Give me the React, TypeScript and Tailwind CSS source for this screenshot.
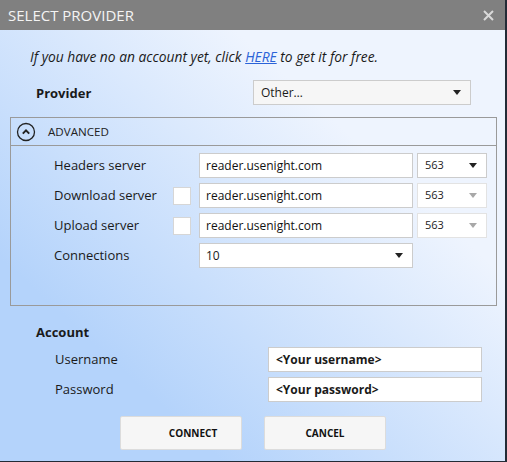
import React from "react";

const font = { fontFamily: '"Open Sans", "Noto Sans", sans-serif' };

function Arrow({ disabled = false }: { disabled?: boolean }) {
  return (
    <svg width="8" height="5" viewBox="0 0 8 5" className="shrink-0">
      <path d="M0 0 L8 0 L4 5 Z" fill={disabled ? "#a8a8a8" : "#222"} />
    </svg>
  );
}

function Port({ disabled = false }: { disabled?: boolean }) {
  return (
    <div
      className={`ml-[4px] flex h-[25px] w-[70px] items-center justify-between border bg-white pl-[7px] pr-[9px] text-[11px] text-[#222] ${
        disabled ? "border-[#e3e3e3]" : "border-[#cccccc]"
      }`}
    >
      <span>563</span>
      <Arrow disabled={disabled} />
    </div>
  );
}

function Field({ text }: { text: string }) {
  return (
    <div className="flex h-[25px] w-[214px] items-center border border-[#cccccc] bg-white pl-[6px] text-[12px] text-[#111]">
      {text}
    </div>
  );
}

function Check() {
  return <div className="mr-[8px] h-[18px] w-[18px] border border-[#d6d6d6] bg-white" />;
}

export default function App() {
  return (
    <div
      className="flex h-[462px] w-[507px] flex-col border-b border-r-2 border-[#232b36] bg-[linear-gradient(to_bottom_left,#eef4fe_30%,#b4d3fb_78%)] text-[#1a1a1a]"
      style={font}
    >
      <div className="flex h-[30px] shrink-0 items-center justify-between bg-[#808080] pl-[8px] pr-[11px]">
        <span className="text-[15px] text-[#f4f4f4]">SELECT PROVIDER</span>
        <svg width="11" height="11" viewBox="0 0 11 11">
          <path d="M1 1 L10 10 M10 1 L1 10" stroke="#d9d9d9" strokeWidth="2" />
        </svg>
      </div>

      <div className="mt-[18px] h-[18px] pl-[30px] text-[13.8px] italic leading-[18px] text-[#1a1a1a]">
        If you have no an account yet, click{" "}
        <span className="text-[#2b63d8] underline">HERE</span> to get it for free.
      </div>

      <div className="mt-[14px] flex h-[25px] items-center pl-[36px]">
        <span className="w-[217px] pt-[3px] text-[13px] font-bold">Provider</span>
        <div className="flex h-[25px] w-[218px] items-center justify-between border border-[#cccccc] bg-[#f6f6f6] pl-[7px] pr-[9px] text-[12px]">
          <span>Other…</span>
          <Arrow />
        </div>
      </div>

      <div className="ml-[10px] mt-[12px] h-[189px] w-[487px] border border-[#9a9a9a]">
        <div className="flex h-[28px] items-center border-b border-[#9a9a9a] pl-[5px]">
          <svg width="20" height="20" viewBox="0 0 20 20">
            <circle cx="10" cy="10" r="8.5" fill="none" stroke="#222" strokeWidth="1.3" />
            <path d="M6.8 11.6 L10 8.4 L13.2 11.6" fill="none" stroke="#222" strokeWidth="2" />
          </svg>
          <span className="ml-[12px] text-[11.6px] text-[#222]">ADVANCED</span>
        </div>
        <div className="flex flex-col gap-[5px] pl-[43px] pt-[7px]">
          <div className="flex items-center">
            <span className="w-[145px] text-[13px]">Headers server</span>
            <Field text="reader.usenight.com" />
            <Port />
          </div>
          <div className="flex items-center">
            <span className="w-[119px] text-[13px]">Download server</span>
            <Check />
            <Field text="reader.usenight.com" />
            <Port disabled />
          </div>
          <div className="flex items-center">
            <span className="w-[119px] text-[13px]">Upload server</span>
            <Check />
            <Field text="reader.usenight.com" />
            <Port disabled />
          </div>
          <div className="flex items-center">
            <span className="w-[145px] text-[13px]">Connections</span>
            <div className="flex h-[25px] w-[214px] items-center justify-between border border-[#cccccc] bg-white pl-[6px] pr-[9px] text-[12px]">
              <span>10</span>
              <Arrow />
            </div>
          </div>
        </div>
      </div>

      <div className="mt-[17px] h-[18px] pl-[36px] text-[13px] font-bold leading-[18px]">Account</div>

      <div className="mt-[6px] flex flex-col gap-[5px] pl-[55px]">
        <div className="flex items-center">
          <span className="w-[213px] text-[13px]">Username</span>
          <div className="flex h-[25px] w-[214px] items-center border border-[#cccccc] bg-white pl-[7px] text-[12px] font-bold">
            &lt;Your username&gt;
          </div>
        </div>
        <div className="flex items-center">
          <span className="w-[213px] text-[13px]">Password</span>
          <div className="flex h-[25px] w-[214px] items-center border border-[#cccccc] bg-white pl-[7px] text-[12px] font-bold">
            &lt;Your password&gt;
          </div>
        </div>
      </div>

      <div className="mt-[14px] flex gap-[22px] pl-[120px]">
        <div className="flex h-[34px] w-[122px] items-center justify-center rounded-[2px] border border-[#dcdcdc] bg-[#f6f6f6] pl-[24px] text-[10px] font-bold text-[#111]">
          CONNECT
        </div>
        <div className="flex h-[34px] w-[122px] items-center justify-center rounded-[2px] border border-[#dcdcdc] bg-[#f6f6f6] text-[10px] font-bold text-[#111]">
          CANCEL
        </div>
      </div>
    </div>
  );
}
